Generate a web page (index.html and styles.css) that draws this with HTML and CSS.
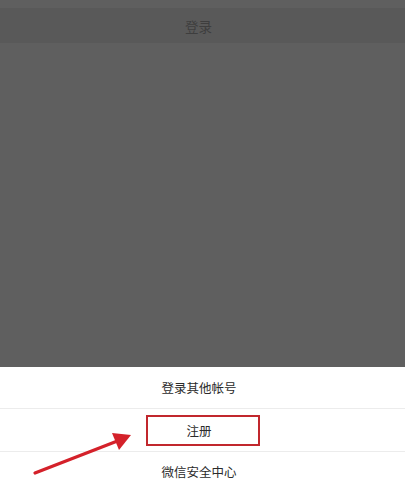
FILE: index.html
```html
<!DOCTYPE html>
<html lang="zh">
<head>
<meta charset="utf-8">
<title>登录</title>
<link rel="stylesheet" href="styles.css">
</head>
<body>
<div class="screen">
  <div class="statusbar"></div>
  <div class="navbar">登录</div>
  <div class="mask"></div>
  <div class="sheet">
    <div class="item item-first">登录其他帐号</div>
    <div class="item item-second"><span class="highlight">注册</span></div>
    <div class="item item-last">微信安全中心</div>
  </div>
  <svg class="arrow" width="405" height="486" viewBox="0 0 405 486">
    <line x1="35" y1="473" x2="120" y2="440" stroke="#d4212a" stroke-width="3.2" stroke-linecap="round"/>
    <polygon points="131,435 112,433 119,450" fill="#d4212a"/>
  </svg>
</div>
</body>
</html>
```
FILE: styles.css
```css
html, body {
  margin: 0;
  padding: 0;
}
body {
  background: #5f5f5f;
  font-family: "Noto Sans CJK SC", "Noto Sans", sans-serif;
}
.screen {
  position: relative;
  width: 405px;
  height: 486px;
  overflow: hidden;
  display: flex;
  flex-direction: column;
  background: #5f5f5f;
}
.statusbar {
  height: 8px;
  flex: none;
}
.navbar {
  height: 35px;
  flex: none;
  background: #595959;
  color: #3e3e3e;
  font-size: 13.5px;
  display: flex;
  align-items: center;
  justify-content: center;
  padding-right: 8px;
  box-sizing: border-box;
}
.mask {
  flex: 1;
}
.sheet {
  flex: none;
  height: 119px;
  background: #ffffff;
  display: flex;
  flex-direction: column;
}
.item {
  box-sizing: border-box;
  display: flex;
  align-items: center;
  justify-content: center;
  font-size: 12.5px;
  color: #2b2b2b;
  border-bottom: 1px solid #ececec;
  padding-right: 7px;
}
.item-first {
  height: 42px;
}
.item-second {
  height: 43px;
  padding-right: 0;
}
.item-last {
  flex: 1;
  border-bottom: none;
  padding-top: 5px;
}
.highlight {
  box-sizing: border-box;
  width: 114px;
  height: 31px;
  border: 2px solid #c1272d;
  display: flex;
  align-items: center;
  justify-content: center;
  padding-right: 7px;
}
.arrow {
  position: absolute;
  left: 0;
  top: 0;
  pointer-events: none;
}
```
